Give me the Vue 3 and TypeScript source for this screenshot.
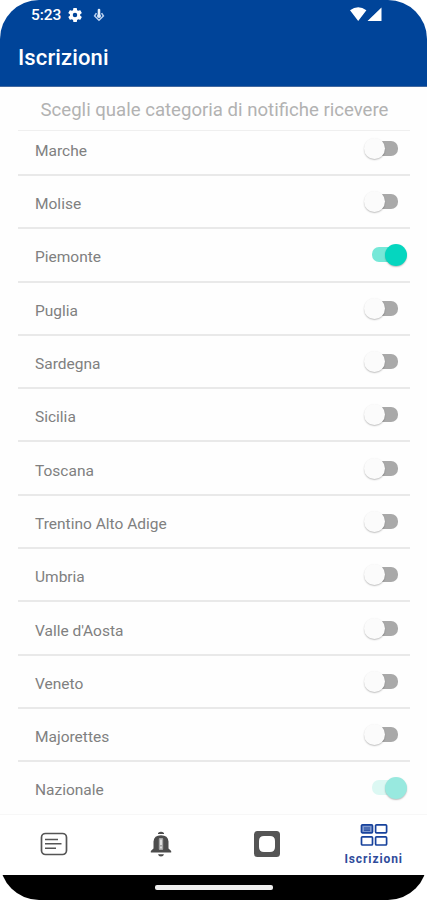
<script setup lang="ts">
interface Region {
  name: string
  on: boolean
  faded?: boolean
}

const regions: Region[] = [
  { name: 'Marche', on: false },
  { name: 'Molise', on: false },
  { name: 'Piemonte', on: true },
  { name: 'Puglia', on: false },
  { name: 'Sardegna', on: false },
  { name: 'Sicilia', on: false },
  { name: 'Toscana', on: false },
  { name: 'Trentino Alto Adige', on: false },
  { name: 'Umbria', on: false },
  { name: "Valle d'Aosta", on: false },
  { name: 'Veneto', on: false },
  { name: 'Majorettes', on: false },
  { name: 'Nazionale', on: true, faded: true },
]
</script>

<template>
  <div class="screen">
    <header class="top">
      <div class="status">
        <span class="time">5:23</span>
        <svg class="gear" viewBox="2 2 20 20" width="14" height="14">
          <path fill="#fff" fill-rule="evenodd" d="M19.4 13c.04-.3.06-.6.06-1s-.02-.7-.07-1l2.1-1.6a.5.5 0 0 0 .1-.6l-2-3.5a.5.5 0 0 0-.6-.2l-2.4 1a7 7 0 0 0-1.6-1l-.4-2.6a.5.5 0 0 0-.5-.4h-4a.5.5 0 0 0-.5.4l-.4 2.6a7 7 0 0 0-1.6 1l-2.4-1a.5.5 0 0 0-.6.2l-2 3.5a.5.5 0 0 0 .1.6L4.8 11a7 7 0 0 0 0 2l-2.1 1.6a.5.5 0 0 0-.1.6l2 3.5c.1.2.4.3.6.2l2.4-1a7 7 0 0 0 1.6 1l.4 2.6c0 .2.2.4.5.4h4c.2 0 .5-.2.5-.4l.4-2.6a7 7 0 0 0 1.6-1l2.4 1c.2.1.5 0 .6-.2l2-3.5a.5.5 0 0 0-.1-.6zM12 15.2a3.2 3.2 0 1 1 0-6.4 3.2 3.2 0 0 1 0 6.4z" />
        </svg>
        <svg class="touch" viewBox="0 0 12 14" width="12" height="14">
          <path d="M6 2v4" stroke="#e2edfa" stroke-width="2.6" stroke-linecap="round" />
          <path d="M3.4 5.2 1.6 8 6 12.2 10.4 8 8.600 5.200" fill="none" stroke="#b9d0ef" stroke-width="1.5" />
          <circle cx="6" cy="8" r="2" fill="#dbe8f8" />
        </svg>
        <svg class="signal" viewBox="0 0 33 15" width="33" height="15">
          <path fill="#fff" d="M0 3.2Q8.2-2.6 16.4 3.2L8.2 14zM31.500.5V14H17.500z" />
        </svg>
      </div>
      <h1 class="title">Iscrizioni</h1>
    </header>

    <main class="content">
      <p class="hint">Scegli quale categoria di notifiche ricevere</p>
      <ul class="list">
        <li v-for="r in regions" :key="r.name" class="row">
          <span class="name">{{ r.name }}</span>
          <span class="switch" :class="{ on: r.on, faded: r.faded }">
            <span class="track"></span>
            <span class="thumb"></span>
          </span>
        </li>
      </ul>
    </main>

    <nav class="tabs">
      <div class="tab">
        <svg viewBox="0 0 28 24" width="28" height="24">
          <rect x="1.5" y="1.5" width="25" height="21" rx="4" fill="none" stroke="#555" stroke-width="1.7" />
          <path d="M5 7.500h13M5 11.700h16.500M5 16.200h11" stroke="#555" stroke-width="1.6" />
        </svg>
      </div>
      <div class="tab">
        <svg viewBox="0 0 22 28" width="22" height="28">
          <path fill="#4c4c4c" d="M8 3Q11 .6 14 3v1H8zM.8 22.500v-1.600l2.700-2.400v-7Q4 5.200 11 5.200t7.500 6.300v7l2.700 2.400v1.600zM8 24.300h6Q13.500 26.600 11 26.600t-3-2.300z" />
          <rect x="8.800" y="8" width="4.400" height="12" rx="1" fill="#a5a5a5" />
          <path d="M11 9.500v5.500M11 16.500v2" stroke="#e8e8e8" stroke-width="1.700" />
        </svg>
      </div>
      <div class="tab">
        <svg viewBox="0 0 28 28" width="28" height="28">
          <path fill="#555" fill-rule="evenodd" d="M4.500 1h19A3.500 3.500 0 0 1 27 4.500v19a3.500 3.500 0 0 1-3.500 3.500h-19A3.500 3.500 0 0 1 1 23.500v-19A3.500 3.500 0 0 1 4.500 1zM11 6Q6 6 6 11v6q0 5 5 5h6q5 0 5-5v-6q0-5-5-5z" />
        </svg>
      </div>
      <div class="tab active">
        <svg viewBox="0 0 28 24" width="28" height="24">
          <g fill="none" stroke="#17429c" stroke-width="1.7">
            <rect x="1.5" y="1.8" width="11" height="8" rx="1" fill="#8099cd" />
            <rect x="15.6" y="1.8" width="11" height="8" rx="1" />
            <rect x="1.5" y="13.8" width="11" height="8.2" rx="1" />
            <rect x="15.6" y="13.8" width="11" height="8.2" rx="1" />
            <path d="M4 5h6M4 7.200h6" stroke-width="1.2" />
          </g>
        </svg>
        <span class="label">Iscrizioni</span>
      </div>
    </nav>
    <footer class="gesture"><span class="pill"></span></footer>
  </div>
</template>

<style>
body {
  background: #fff;
}
</style>

<style scoped>
.screen {
  width: 427px;
  height: 900px;
  display: flex;
  flex-direction: column;
  overflow: hidden;
  border-radius: 39px;
  background: #fefefe;
  font-family: Roboto, sans-serif;
}
.top {
  flex: none;
  box-sizing: border-box;
  height: 87px;
  background: #004499;
  border-bottom: 1px solid #43699f;
  color: #fff;
}
.status {
  display: flex;
  align-items: center;
  height: 30px;
  padding: 0 44px 0 31px;
}
.time {
  width: 37px;
  font-size: 15.5px;
  font-weight: 500;
  letter-spacing: -0.1px;
}
.gear {
  margin-top: -1px;
}
.touch {
  margin-left: 11px;
  margin-top: -1px;
}
.signal {
  margin-left: auto;
  margin-top: -2px;
}
.title {
  margin: 14px 0 0 18px;
  font-size: 22px;
  line-height: 28px;
  font-weight: 500;
  letter-spacing: 0.12px;
}
.content {
  flex: none;
  height: 727px;
  box-sizing: border-box;
  overflow: hidden;
  padding: 0 17px 0 18px;
}
.hint {
  box-sizing: border-box;
  height: 44px;
  margin: 0;
  padding-left: 1px;
  border-bottom: 1px solid #efefef;
  color: #b2b2b2;
  text-align: center;
  font-size: 18.6px;
  line-height: 46px;
  white-space: nowrap;
}
.list {
  height: 683px;
  display: flex;
  flex-direction: column;
  margin: 0;
  padding: 0;
  overflow: hidden;
  list-style: none;
}
.row {
  flex: none;
  box-sizing: border-box;
  height: 53.3px;
  display: flex;
  align-items: center;
  justify-content: space-between;
  padding: 5px 3px 0 17px;
  border-bottom: 2px solid #e9e9e9;
}
.row:first-child {
  height: 45px;
  padding-top: 0;
  padding-bottom: 3px;
}
.name {
  color: #808080;
  font-size: 15.5px;
  line-height: 20px;
}
.switch {
  position: relative;
  width: 43px;
  height: 22px;
  margin-top: -4px;
}
.track {
  position: absolute;
  top: 3px;
  left: 8px;
  width: 26px;
  height: 15px;
  border-radius: 7px;
  background: #a9a9a9;
}
.thumb {
  position: absolute;
  top: 0;
  left: 0;
  width: 21px;
  height: 21px;
  border-radius: 50%;
  background: #fbfbfb;
  box-shadow: 0 1px 1.5px rgba(0, 0, 0, 0.25);
}
.on .track {
  left: 8px;
  background: #76e8d8;
}
.on .thumb {
  left: 21px;
  width: 22px;
  height: 22px;
  background: #05d6bf;
}
.faded .track {
  background: #dcf8f3;
}
.on.faded .thumb {
  background: #98e9df;
}
.tabs {
  flex: none;
  box-sizing: border-box;
  height: 61px;
  display: grid;
  grid-template-columns: repeat(4, 1fr);
  border-top: 1px solid #f7f7f7;
  background: #fff;
}
.tab {
  display: flex;
  flex-direction: column;
  align-items: center;
  justify-content: center;
  padding: 0 0 2px 1px;
}
.tab.active {
  justify-content: flex-start;
  padding-top: 8px;
  padding-left: 0;
}
.label {
  color: #2f4b9b;
  font-size: 12px;
  line-height: 14px;
  font-weight: 700;
  letter-spacing: 0.9px;
  margin-top: 5px;
}
.gesture {
  flex: 1;
  display: flex;
  align-items: center;
  justify-content: center;
  background: #000;
}
.pill {
  width: 118px;
  height: 5px;
  border-radius: 2px;
  background: #eee;
}
</style>
